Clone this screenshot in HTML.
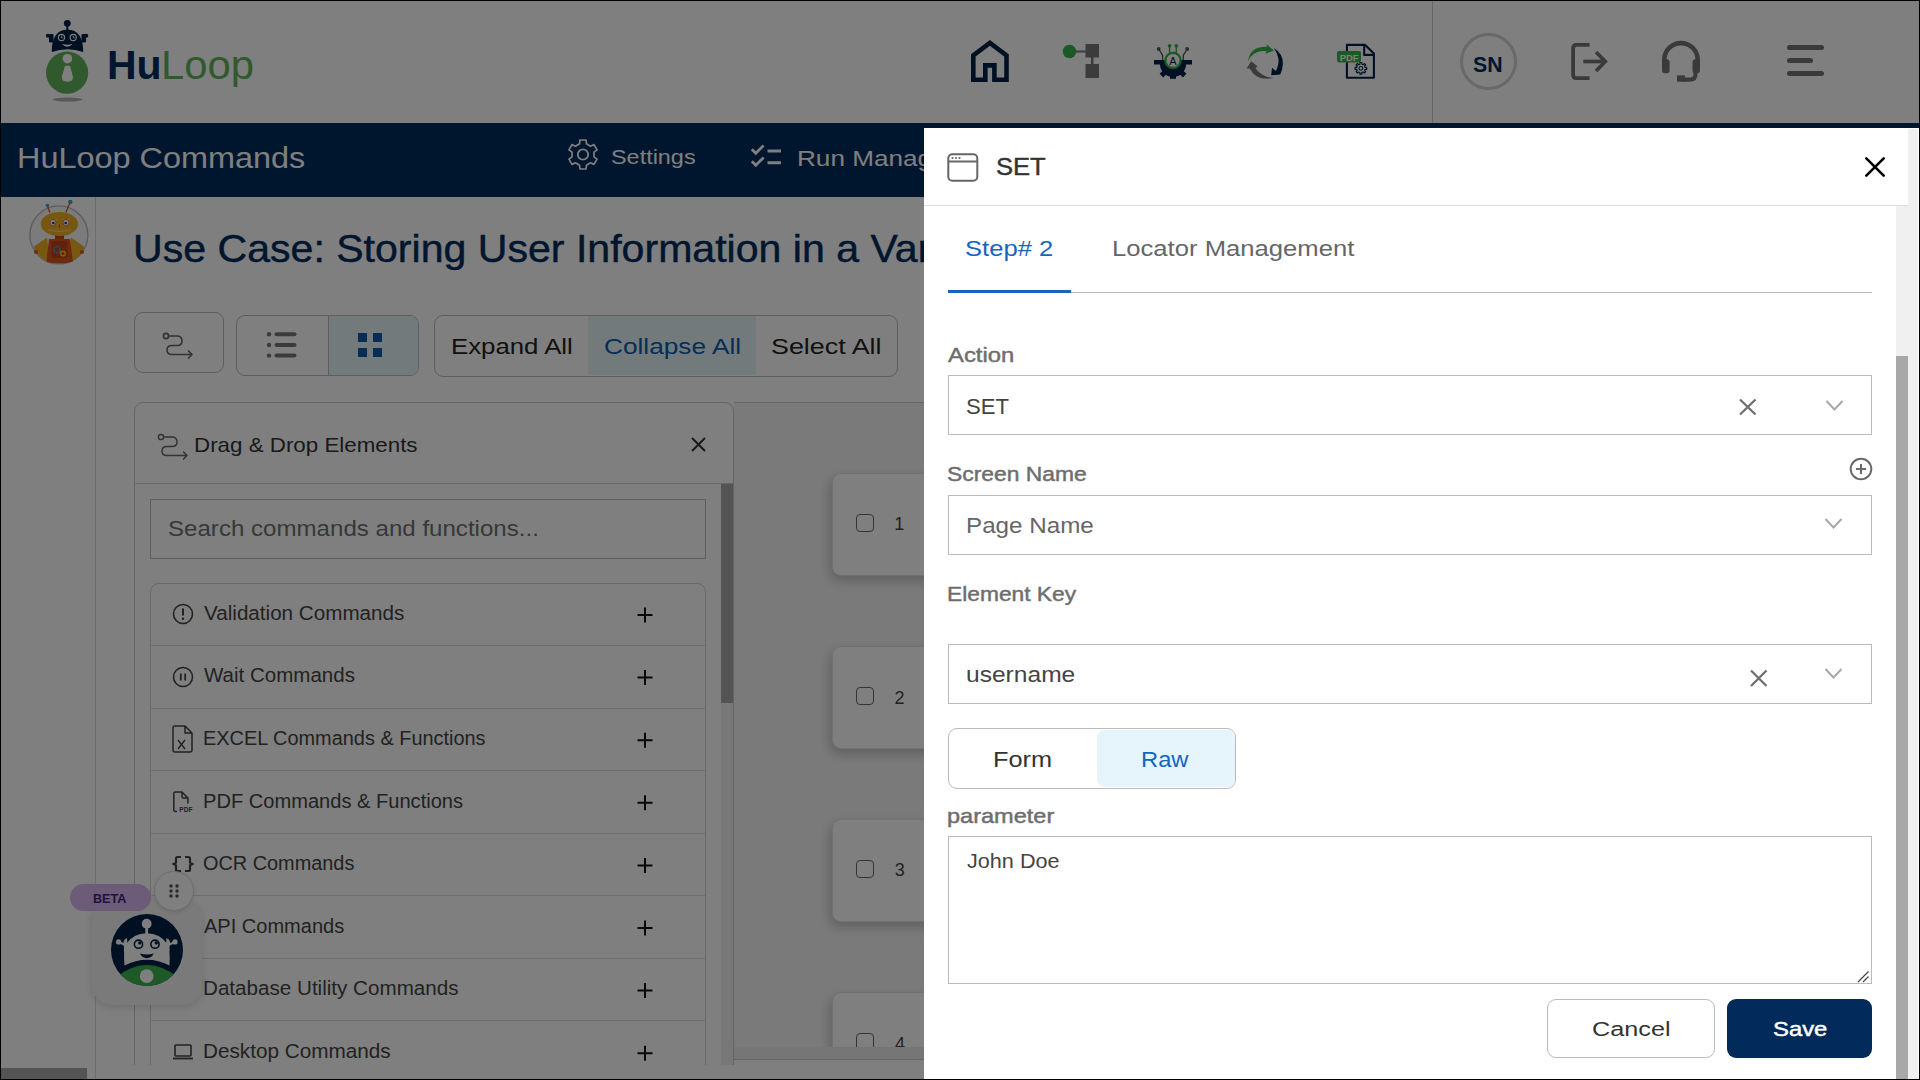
<!DOCTYPE html>
<html><head><meta charset="utf-8">
<style>
*{box-sizing:border-box;margin:0;padding:0}
html,body{width:1920px;height:1080px;overflow:hidden;background:#fff}
body{font-family:"Liberation Sans",sans-serif;position:relative}
.a{position:absolute}
.t{position:absolute;white-space:nowrap;font-family:"Liberation Sans",sans-serif}
svg{position:absolute;overflow:visible}
</style></head><body>
<!-- ============ APP (under overlay) ============ -->
<div class="a" style="left:0;top:0;width:1920px;height:123px;background:#fff"></div>
<!-- logo -->
<svg style="left:0;top:0" width="300" height="123" viewBox="0 0 300 123">
  <circle cx="67.3" cy="23.3" r="3.4" fill="#002147"/>
  <rect x="66.3" y="25" width="2" height="5.5" fill="#002147"/>
  <path d="M51.8 52 C51.5 38 57 29.5 67.5 29.5 C78 29.5 83.5 38 83.2 52 Q67.5 46.5 51.8 52Z" fill="#002147"/>
  <rect x="49" y="34" width="4.5" height="8.5" rx="1.2" fill="#002147"/>
  <rect x="81.5" y="34" width="4.5" height="8.5" rx="1.2" fill="#002147"/>
  <path d="M48 35.8 L51 37.5 M86.2 35.8 L83 37.5" stroke="#002147" stroke-width="1.5"/>
  <circle cx="47.9" cy="35.8" r="2" fill="#002147"/><circle cx="86.25" cy="35.8" r="2" fill="#002147"/>
  <circle cx="61.5" cy="37.5" r="3.1" fill="none" stroke="#fff" stroke-width="1.1"/>
  <circle cx="73.2" cy="37.5" r="3.1" fill="none" stroke="#fff" stroke-width="1.1"/>
  <path d="M61.5 35.5 V37.8 H63.2 M73.2 35.5 V37.8 H74.9" fill="none" stroke="#fff" stroke-width=".8"/>
  <path d="M62 43.8 Q67.3 45.8 72.5 43.8 Q70.5 46.8 67.3 46.8 Q64 46.8 62 43.8Z" fill="#fff"/>
  <circle cx="67.1" cy="72.7" r="21.1" fill="#60b45c"/>
  <circle cx="67.4" cy="58.7" r="4.8" fill="#fff"/>
  <path d="M65 65.8 H70 L72.9 76.5 Q73.5 81.7 67.4 81.7 Q61.3 81.7 61.9 76.5Z" fill="#fff"/>
  <ellipse cx="67.5" cy="99.6" rx="15" ry="2" fill="#b0b0b0"/>
</svg>
<span id="logoHu" class="t" style="left:107.26px;top:43px;font-size:40.33px;line-height:45px;letter-spacing:0.000px;transform:scaleX(1.0163);transform-origin:0 0;color:#002b5c;font-weight:700;">Hu</span><span id="logoLoop" class="t" style="left:160.77px;top:43px;font-size:39.75px;line-height:44px;letter-spacing:0.000px;transform:scaleX(1.0514);transform-origin:0 0;color:#60b45c;font-weight:400;">Loop</span>
<!-- header icons -->
<svg style="left:970px;top:40px" width="40" height="43" viewBox="0 0 40 43">
  <path d="M15.3 39.7 H3.3 V15.3 L19.9 2.9 L36.5 15.3 V39.7 H24.4 V25.4 H15.3 Z" fill="none" stroke="#002147" stroke-width="4.6" stroke-linejoin="miter"/>
</svg>
<svg style="left:1062px;top:43px" width="40" height="37" viewBox="0 0 40 37">
  <circle cx="7.5" cy="8.5" r="6.8" fill="#38b44a"/>
  <rect x="14" y="7.5" width="10" height="2" fill="#787878"/>
  <rect x="23.5" y="1" width="13.5" height="13.5" fill="#787878"/>
  <rect x="29" y="14" width="2.5" height="7" fill="#787878"/>
  <rect x="23.5" y="21" width="13.5" height="14" fill="#787878"/>
</svg>
<svg style="left:1153px;top:43px" width="42" height="38" viewBox="0 0 42 38">
  <defs><clipPath id="gclip"><rect x="0" y="17" width="42" height="21"/></clipPath></defs>
  <g clip-path="url(#gclip)" fill="#002147">
    <rect x="1" y="17" width="38" height="4.5"/>
    <circle cx="20" cy="21" r="13"/>
    <rect x="17" y="30" width="6" height="5.8"/>
    <rect x="-3" y="-2.5" width="6" height="5" transform="translate(29.5 30.5) rotate(45)"/>
    <rect x="-3" y="-2.5" width="6" height="5" transform="translate(10.5 30.5) rotate(-45)"/>
  </g>
  <path d="M5.7 6 L9.6 12.3 V17 M34.2 6 L30.3 12.3 V17" fill="none" stroke="#555" stroke-width="1.3"/>
  <circle cx="5.7" cy="6" r="1.9" fill="#555"/><circle cx="34.2" cy="6" r="1.9" fill="#555"/>
  <path d="M16.6 3 V11 M23.3 3 V11" stroke="#38b44a" stroke-width="1.5"/>
  <circle cx="16.6" cy="2.8" r="1.9" fill="#38b44a"/><circle cx="23.3" cy="2.8" r="1.9" fill="#38b44a"/>
  <circle cx="20" cy="17.4" r="7.6" fill="#fff" stroke="#38b44a" stroke-width="2.4"/>
  <text x="20" y="21.6" font-family="Liberation Sans" font-size="11" text-anchor="middle" fill="#002147">A</text>
</svg>
<svg style="left:1245px;top:43px" width="40" height="38" viewBox="0 0 40 38">
  <path d="M3 18.5 Q5 3 22 3.8 L21.5 1.2 L29 7.6 L20.5 10.8 L21.5 8.2 Q8 6.5 3 18.5 Z" fill="#38b44a"/>
  <path d="M28.9 4.9 Q38.5 11 37.9 21 Q37.5 27 35.2 31.5 L26.2 32.2 L27 24.8 L31 28 Q34 21 33.5 16 Q32 9 28.9 4.9Z" fill="#002147"/>
  <path d="M28.5 35 Q17 34 10.5 25.5 L12.5 23.3 L6.2 18.2 L1.6 25.6 L4.8 25.4 Q11 38.5 28.5 35Z" fill="#777"/>
</svg>
<svg style="left:1335px;top:43px" width="42" height="38" viewBox="0 0 42 38">
  <path d="M11.9 1.9 H30.2 L38.9 10.6 V34.8 H11.9Z" fill="none" stroke="#002147" stroke-width="2.1" stroke-linejoin="round"/>
  <path d="M29.2 1.9 V11.9 H38.9" fill="none" stroke="#002147" stroke-width="2.1" stroke-linejoin="round"/>
  <rect x="2" y="8" width="24" height="11.5" rx="2.2" fill="#38b44a"/>
  <text x="14" y="18.2" font-family="Liberation Sans" font-weight="700" font-size="9.4" text-anchor="middle" fill="#fff">PDF</text>
  <path d="M30.10 24.43 L31.71 24.31 L31.71 26.39 L30.10 26.27 L29.52 27.67 L30.74 28.72 L29.27 30.19 L28.22 28.97 L26.82 29.55 L26.94 31.16 L24.86 31.16 L24.98 29.55 L23.58 28.97 L22.53 30.19 L21.06 28.72 L22.28 27.67 L21.70 26.27 L20.09 26.39 L20.09 24.31 L21.70 24.43 L22.28 23.03 L21.06 21.98 L22.53 20.51 L23.58 21.73 L24.98 21.15 L24.86 19.54 L26.94 19.54 L26.82 21.15 L28.22 21.73 L29.27 20.51 L30.74 21.98 L29.52 23.03Z" fill="none" stroke="#002147" stroke-width="1.1" stroke-linejoin="round"/>
  <circle cx="25.9" cy="25.35" r="1.9" fill="none" stroke="#002147" stroke-width="1.1"/>
</svg>
<div class="a" style="left:1432px;top:0;width:1px;height:123px;background:#ccc"></div>
<div class="a" style="left:1460px;top:33px;width:57px;height:57px;border:3px solid #d2d2d2;border-radius:50%"></div>
<span id="sn" class="t" style="left:1473.39px;top:53px;font-size:21.37px;line-height:24px;letter-spacing:0.000px;transform:scaleX(0.9958);transform-origin:0 0;color:#002b5c;font-weight:700;">SN</span>
<svg style="left:1570px;top:42px" width="40" height="40" viewBox="0 0 40 40">
  <path d="M19.6 2.8 H6.5 Q3.1 2.8 3.1 6.2 V32.7 Q3.1 36.1 6.5 36.1 H19.6" fill="none" stroke="#757575" stroke-width="3.8"/>
  <path d="M13.3 19.5 H34" fill="none" stroke="#757575" stroke-width="3.7"/>
  <path d="M26 10 L35.3 19.5 L26 29" fill="none" stroke="#757575" stroke-width="3.7" stroke-linejoin="miter"/>
</svg>
<svg style="left:1660px;top:40px" width="42" height="43" viewBox="0 0 42 43">
  <path d="M4.3 28 V19.8 A16.7 16.7 0 0 1 37.7 19.8 V28" fill="none" stroke="#757575" stroke-width="4.6"/>
  <rect x="2" y="19.2" width="7.6" height="14.1" rx="3" fill="#757575"/>
  <rect x="32.5" y="19.2" width="7.5" height="14.1" rx="3" fill="#757575"/>
  <path d="M35.5 31 V34 Q35.5 39.6 30 39.6 H22" fill="none" stroke="#757575" stroke-width="4.2"/>
  <rect x="17" y="35.4" width="8" height="6.3" fill="#757575"/>
</svg>
<svg style="left:1786px;top:44px" width="40" height="34" viewBox="0 0 40 34">
  <rect x="1" y="1" width="37" height="5" rx="2.5" fill="#757575"/>
  <rect x="1" y="14" width="26" height="5" rx="2.5" fill="#757575"/>
  <rect x="1" y="27" width="37" height="5" rx="2.5" fill="#757575"/>
</svg>

<!-- nav bar -->
<div class="a" style="left:0;top:123px;width:1920px;height:74px;background:#002b5c"></div>
<span id="navTitle" class="t" style="left:16.84px;top:141px;font-size:29.80px;line-height:33px;letter-spacing:0.000px;transform:scaleX(1.0880);transform-origin:0 0;color:#ffffff;font-weight:400;">HuLoop Commands</span>
<svg style="left:566px;top:138px" width="34" height="34" viewBox="0 0 34 34">
  <path d="M13.54 5.85 L13.92 2.02 L20.08 2.02 L20.46 5.85 L24.49 8.18 L28.00 6.60 L31.08 11.93 L27.96 14.17 L27.96 18.83 L31.08 21.07 L28.00 26.40 L24.49 24.82 L20.46 27.15 L20.08 30.98 L13.92 30.98 L13.54 27.15 L9.51 24.82 L6.00 26.40 L2.92 21.07 L6.04 18.83 L6.04 14.17 L2.92 11.93 L6.00 6.60 L9.51 8.18Z" fill="none" stroke="#fff" stroke-width="1.7" stroke-linejoin="round"/>
  <circle cx="17" cy="16.5" r="5.2" fill="none" stroke="#fff" stroke-width="1.8"/>
</svg>
<span id="navSettings" class="t" style="left:610.94px;top:146px;font-size:19.77px;line-height:22px;letter-spacing:0.000px;transform:scaleX(1.1846);transform-origin:0 0;color:#ffffff;font-weight:400;">Settings</span>
<svg style="left:750px;top:144px" width="34" height="26" viewBox="0 0 34 26">
  <path d="M1.8 5.3 L5.8 9.3 L13.6 1.5 M1.8 17.3 L5.8 21.3 L13.6 13.5" fill="none" stroke="#fff" stroke-width="2.8" stroke-linejoin="miter"/>
  <path d="M17.5 7 H31 M17.5 18.75 H31" stroke="#fff" stroke-width="3"/>
</svg>
<span id="navRun" class="t" style="left:796.75px;top:146px;font-size:22.53px;line-height:25px;letter-spacing:0.000px;transform:scaleX(1.1606);transform-origin:0 0;color:#ffffff;font-weight:400;">Run Management</span>

<!-- sidebar -->
<div class="a" style="left:95px;top:197px;width:1px;height:883px;background:#ddd"></div>
<svg style="left:28px;top:199px" width="64" height="66" viewBox="0 0 64 66">
  <circle cx="30.9" cy="35.9" r="29" fill="#f6f6f6" stroke="#bbb" stroke-width="1.4"/>
  <path d="M21.9 13.4 L19.4 7 M37.8 13.4 L42.3 3" stroke="#d4572a" stroke-width="1.3"/>
  <circle cx="19.4" cy="6.5" r="1.8" fill="#3aa0d8"/><circle cx="42.3" cy="2.9" r="2.2" fill="#3aa0d8"/>
  <path d="M19 38.4 L5.5 48 Q9 56 16 61 L22 62Z M43 38.4 L56.5 48 Q53 56 46 61 L40 62Z" fill="#f0b020"/>
  <rect x="27" y="36" width="9" height="5" fill="#c8461a"/>
  <path d="M21 40 H42 L44.8 62.7 Q31.5 66 18.4 62.7Z" fill="#d9541e"/>
  <rect x="23.5" y="42" width="16" height="17" rx="3" fill="#c2400f"/>
  <circle cx="8" cy="53" r="2" fill="#d9541e"/><circle cx="54" cy="53" r="2" fill="#d9541e"/>
  <ellipse cx="31.4" cy="25" rx="18.6" ry="12" fill="#f0b020"/>
  <rect x="22" y="20" width="7" height="1.5" fill="#fbd58a"/><rect x="35" y="20" width="7" height="1.5" fill="#fbd58a"/>
  <ellipse cx="25" cy="23.6" rx="3" ry="3.3" fill="#fff" stroke="#d4572a" stroke-width=".8"/>
  <ellipse cx="38" cy="23.6" rx="3" ry="3.3" fill="#fff" stroke="#d4572a" stroke-width=".8"/>
  <circle cx="25.3" cy="24" r="1.3" fill="#1f3b63"/><circle cx="37.7" cy="24" r="1.3" fill="#1f3b63"/>
  <rect x="31" y="25.5" width="1" height="3.5" fill="#c8461a"/>
  <path d="M20 31 Q31.5 34 43 31" stroke="#fbd58a" stroke-width="1" fill="none"/>
  <circle cx="29" cy="50.5" r="3.2" fill="none" stroke="#3aa0d8" stroke-width="1.8" stroke-dasharray="1.4 .8"/>
  <circle cx="35" cy="54.5" r="2.3" fill="none" stroke="#f5c518" stroke-width="1.5"/>
</svg>

<!-- title -->
<span id="title" class="t" style="left:132.63px;top:227px;font-size:38.81px;line-height:43px;letter-spacing:0.000px;transform:scaleX(1.0589);transform-origin:0 0;color:#002b5c;font-weight:400;-webkit-text-stroke:0.45px #002b5c">Use Case: Storing User Information in a Variable</span>

<!-- toolbar -->
<div class="a" style="left:134px;top:312px;width:90px;height:61px;border:1px solid #bbb;border-radius:9px"></div>
<svg style="left:162px;top:332px" width="34" height="26" viewBox="0 0 34 26">
  <circle cx="4" cy="4" r="2.6" fill="none" stroke="#666" stroke-width="1.6"/>
  <path d="M6.6 4 H15 Q20 4 20 9 Q20 13.5 15 13.5 H10 Q5 13.5 5 18 Q5 22.5 10 22.5 H30 M26.5 19 L30 22.5 L26.5 26" fill="none" stroke="#666" stroke-width="1.6" stroke-linecap="round" stroke-linejoin="round"/>
</svg>
<div class="a" style="left:236px;top:315px;width:183px;height:61px;border:1px solid #bbb;border-radius:9px;overflow:hidden">
  <div class="a" style="left:91px;top:0;width:92px;height:59px;background:#e6f5f8;border-left:1px solid #bbb"></div>
</div>
<svg style="left:266px;top:331px" width="34" height="30" viewBox="0 0 34 30">
  <circle cx="3" cy="3.3" r="2.2" fill="#777"/><circle cx="3" cy="14" r="2.2" fill="#777"/><circle cx="3" cy="24.6" r="2.2" fill="#777"/>
  <rect x="8.5" y="1.3" width="22" height="4" rx="2" fill="#777"/>
  <rect x="8.5" y="12" width="22" height="4" rx="2" fill="#777"/>
  <rect x="8.5" y="22.6" width="22" height="4" rx="2" fill="#777"/>
</svg>
<svg style="left:358px;top:333px" width="26" height="24" viewBox="0 0 26 24">
  <rect x="0" y="0" width="9" height="9" fill="#0f5aa8"/><rect x="15" y="0" width="9" height="9" fill="#0f5aa8"/>
  <rect x="0" y="15" width="9" height="9" fill="#0f5aa8"/><rect x="15" y="15" width="9" height="9" fill="#0f5aa8"/>
</svg>
<div class="a" style="left:434px;top:315px;width:464px;height:62px;border:1px solid #bbb;border-radius:9px;overflow:hidden">
  <div class="a" style="left:153px;top:0;width:168px;height:59px;background:#e6f5f8"></div>
</div>
<span id="expand" class="t" style="left:450.68px;top:334px;font-size:22.09px;line-height:25px;letter-spacing:0.000px;transform:scaleX(1.1677);transform-origin:0 0;color:#222222;font-weight:400;">Expand All</span><span id="collapse" class="t" style="left:603.67px;top:334px;font-size:22.09px;line-height:25px;letter-spacing:0.000px;transform:scaleX(1.1882);transform-origin:0 0;color:#0b5cad;font-weight:400;">Collapse All</span><span id="select" class="t" style="left:771.28px;top:334px;font-size:22.09px;line-height:25px;letter-spacing:0.000px;transform:scaleX(1.2168);transform-origin:0 0;color:#222222;font-weight:400;">Select All</span>
<!-- drag & drop panel -->
<div class="a" style="left:134px;top:402px;width:600px;height:700px;border:1px solid #c8c8c8;border-radius:9px;background:#fff"></div>
<div class="a" style="left:135px;top:483px;width:598px;height:1px;background:#ccc"></div>
<svg style="left:157px;top:433px" width="34" height="28" viewBox="0 0 34 28">
  <circle cx="4" cy="4" r="2.6" fill="none" stroke="#666" stroke-width="1.5"/>
  <path d="M6.6 4 H15 Q20 4 20 9 Q20 13.5 15 13.5 H10 Q5 13.5 5 18 Q5 22.5 10 22.5 H30 M26.5 19 L30 22.5 L26.5 26" fill="none" stroke="#666" stroke-width="1.5" stroke-linecap="round" stroke-linejoin="round"/>
</svg>
<span id="ddTitle" class="t" style="left:193.97px;top:433px;font-size:20.78px;line-height:23px;letter-spacing:0.000px;transform:scaleX(1.0760);transform-origin:0 0;color:#333333;font-weight:400;">Drag &amp; Drop Elements</span>
<svg style="left:690px;top:436px" width="17" height="17" viewBox="0 0 17 17">
  <path d="M2 2 L15 15 M15 2 L2 15" stroke="#333" stroke-width="2"/>
</svg>
<div class="a" style="left:150px;top:499px;width:556px;height:60px;border:1px solid #bbb"></div>
<span id="search" class="t" style="left:168.11px;top:517px;font-size:21.22px;line-height:23px;letter-spacing:0.000px;transform:scaleX(1.1352);transform-origin:0 0;color:#707070;font-weight:400;">Search commands and functions...</span>
<div class="a" style="left:721px;top:484px;width:12px;height:581px;background:#f1f1f1"></div>
<div class="a" style="left:721px;top:484px;width:12px;height:219px;background:#a8a8a8"></div>
<div class="a" style="left:150px;top:583px;width:556px;height:600px;border:1px solid #d0d0d0;border-radius:9px"></div>
<div class="a" style="left:151px;top:645px;width:554px;height:1px;background:#ddd"></div>
<div class="a" style="left:151px;top:708px;width:554px;height:1px;background:#ddd"></div>
<div class="a" style="left:151px;top:770px;width:554px;height:1px;background:#ddd"></div>
<div class="a" style="left:151px;top:833px;width:554px;height:1px;background:#ddd"></div>
<div class="a" style="left:151px;top:895px;width:554px;height:1px;background:#ddd"></div>
<div class="a" style="left:151px;top:958px;width:554px;height:1px;background:#ddd"></div>
<div class="a" style="left:151px;top:1020px;width:554px;height:1px;background:#ddd"></div>
<span id="row1" class="t" style="left:204.21px;top:602px;font-size:20.35px;line-height:22px;letter-spacing:0.000px;transform:scaleX(1.0143);transform-origin:0 0;color:#444444;font-weight:400;">Validation Commands</span><span id="row2" class="t" style="left:204.21px;top:664px;font-size:20.35px;line-height:22px;letter-spacing:0.000px;transform:scaleX(1.0088);transform-origin:0 0;color:#444444;font-weight:400;">Wait Commands</span><span id="row3" class="t" style="left:202.67px;top:727px;font-size:20.35px;line-height:22px;letter-spacing:0.000px;transform:scaleX(0.9787);transform-origin:0 0;color:#444444;font-weight:400;">EXCEL Commands &amp; Functions</span><span id="row4" class="t" style="left:202.65px;top:790px;font-size:20.35px;line-height:22px;letter-spacing:0.000px;transform:scaleX(0.9872);transform-origin:0 0;color:#444444;font-weight:400;">PDF Commands &amp; Functions</span><span id="row5" class="t" style="left:203.36px;top:852px;font-size:20.35px;line-height:22px;letter-spacing:0.000px;transform:scaleX(0.9773);transform-origin:0 0;color:#444444;font-weight:400;">OCR Commands</span><span id="row6" class="t" style="left:204.26px;top:915px;font-size:20.35px;line-height:22px;letter-spacing:0.000px;transform:scaleX(0.9842);transform-origin:0 0;color:#444444;font-weight:400;">API Commands</span><span id="row7" class="t" style="left:202.61px;top:977px;font-size:20.35px;line-height:22px;letter-spacing:0.000px;transform:scaleX(1.0135);transform-origin:0 0;color:#444444;font-weight:400;">Database Utility Commands</span><span id="row8" class="t" style="left:202.60px;top:1040px;font-size:20.35px;line-height:22px;letter-spacing:0.000px;transform:scaleX(1.0182);transform-origin:0 0;color:#444444;font-weight:400;">Desktop Commands</span>
<!-- row icons -->
<svg style="left:172px;top:603px" width="22" height="22" viewBox="0 0 22 22">
  <circle cx="11" cy="11" r="9.5" fill="none" stroke="#444" stroke-width="1.6"/>
  <path d="M11 5.5 V12.5" stroke="#444" stroke-width="2"/><circle cx="11" cy="15.8" r="1.2" fill="#444"/>
</svg>
<svg style="left:172px;top:666px" width="22" height="22" viewBox="0 0 22 22">
  <circle cx="11" cy="11" r="9.5" fill="none" stroke="#444" stroke-width="1.6"/>
  <path d="M8.8 7.5 V14.5 M13.2 7.5 V14.5" stroke="#444" stroke-width="1.8"/>
</svg>
<svg style="left:172px;top:725px" width="22" height="28" viewBox="0 0 22 28">
  <path d="M3 1 H13 L20 8 V25 Q20 27 18 27 H3 Q1 27 1 25 V3 Q1 1 3 1Z M13 1 V8 H20" fill="none" stroke="#444" stroke-width="1.5" stroke-linejoin="round"/>
  <path d="M6 15 L13 24 M13 15 L6 24" stroke="#444" stroke-width="1.4"/>
</svg>
<svg style="left:172px;top:791px" width="22" height="24" viewBox="0 0 22 24">
  <path d="M5 20.4 H3.5 Q1.8 20.4 1.8 18.7 V2.7 Q1.8 1 3.5 1 H10 L15.9 7 V12.5 M10 1 V5.8 Q10 7 11.2 7 H15.9" fill="none" stroke="#444" stroke-width="1.5" stroke-linejoin="round"/>
  <text x="7.3" y="20.5" font-family="Liberation Sans" font-weight="700" font-size="7.6" textLength="13.2" lengthAdjust="spacingAndGlyphs" fill="#444">PDF</text>
</svg>
<svg style="left:172px;top:853px" width="22" height="22" viewBox="0 0 22 22">
  <path d="M9 4 H5.6 Q4 4 4 5.6 V9.6 L1.6 11 L4 12.4 V16.4 Q4 18 5.6 18 H9 M13 4 H16.4 Q18 4 18 5.6 V9.6 L20.4 11 L18 12.4 V16.4 Q18 18 16.4 18 H13" fill="none" stroke="#444" stroke-width="2.2" stroke-linejoin="miter"/>
</svg>
<svg style="left:172px;top:1043px" width="22" height="18" viewBox="0 0 22 18">
  <rect x="3" y="2" width="16" height="11" rx="1" fill="none" stroke="#444" stroke-width="1.6"/>
  <path d="M1 15.5 H21" stroke="#444" stroke-width="1.8"/>
</svg>
<!-- plus signs -->
<svg style="left:636px;top:604px" width="18" height="450" viewBox="0 0 18 450">
  <g stroke="#111" stroke-width="2">
  <path d="M1.5 11 H16.5 M9 3.5 V18.5"/>
  <path d="M1.5 73.6 H16.5 M9 66.1 V81.1"/>
  <path d="M1.5 136.2 H16.5 M9 128.7 V143.7"/>
  <path d="M1.5 198.8 H16.5 M9 191.3 V206.3"/>
  <path d="M1.5 261.4 H16.5 M9 253.9 V268.9"/>
  <path d="M1.5 324 H16.5 M9 316.5 V331.5"/>
  <path d="M1.5 386.6 H16.5 M9 379.1 V394.1"/>
  <path d="M1.5 449.2 H16.5 M9 441.7 V456.7"/>
  </g>
</svg>
<!-- bottom of main area -->
<div class="a" style="left:96px;top:1065px;width:828px;height:15px;background:#fff"></div>
<div class="a" style="left:1px;top:1068px;width:86px;height:11px;background:#a8a8a8"></div>

<!-- canvas -->
<div class="a" style="left:734px;top:402px;width:1200px;height:645px;background:#f5f5f5;border-top:1px solid #ccc"></div>
<div class="a" style="left:734px;top:1047px;width:1200px;height:13px;background:#ececec;border-bottom:1px solid #ccc"></div>
<div class="a" style="left:832px;top:473px;width:300px;height:103px;background:#fff;border:1px solid #e4e4e4;border-radius:9px;box-shadow:-2px 5px 12px rgba(0,0,0,.22)"></div>
<div class="a" style="left:832px;top:646px;width:300px;height:103px;background:#fff;border:1px solid #e4e4e4;border-radius:9px;box-shadow:-2px 5px 12px rgba(0,0,0,.22)"></div>
<div class="a" style="left:832px;top:819px;width:300px;height:103px;background:#fff;border:1px solid #e4e4e4;border-radius:9px;box-shadow:-2px 5px 12px rgba(0,0,0,.22)"></div>
<div class="a" style="left:734px;top:900px;width:400px;height:147px;overflow:hidden">
  <div class="a" style="left:98px;top:92px;width:300px;height:103px;background:#fff;border:1px solid #e4e4e4;border-radius:9px;box-shadow:-2px 5px 12px rgba(0,0,0,.22)"></div>
  <div class="a" style="left:122px;top:133px;width:18px;height:18px;border:1.6px solid #6a6a6a;border-radius:4px"></div>
</div>
<div class="a" style="left:856px;top:514px;width:18px;height:18px;border:1.6px solid #6a6a6a;border-radius:4px"></div>
<div class="a" style="left:856px;top:687px;width:18px;height:18px;border:1.6px solid #6a6a6a;border-radius:4px"></div>
<div class="a" style="left:856px;top:860px;width:18px;height:18px;border:1.6px solid #6a6a6a;border-radius:4px"></div>
<span id="c1" class="t" style="left:894.13px;top:514px;font-size:18.00px;line-height:20px;letter-spacing:0.000px;transform:scaleX(1.0000);transform-origin:0 0;color:#444444;font-weight:400;">1</span><span id="c2" class="t" style="left:894.59px;top:688px;font-size:18.00px;line-height:20px;letter-spacing:0.000px;transform:scaleX(1.0000);transform-origin:0 0;color:#444444;font-weight:400;">2</span><span id="c3" class="t" style="left:894.81px;top:860px;font-size:18.00px;line-height:20px;letter-spacing:0.000px;transform:scaleX(1.0000);transform-origin:0 0;color:#444444;font-weight:400;">3</span>
<div class="a" style="left:0;top:0;width:1920px;height:1047px;overflow:hidden"><span id="c4" class="t" style="left:895.09px;top:1034px;font-size:18.00px;line-height:20px;letter-spacing:0.000px;transform:scaleX(1.0000);transform-origin:0 0;color:#444444;font-weight:400;">4</span></div>

<!-- chat widget -->
<div class="a" style="left:92px;top:899px;width:110px;height:106px;background:#f4f4f4;border-radius:20px;box-shadow:0 2px 8px rgba(0,0,0,.15)"></div>
<svg style="left:111px;top:914px" width="72" height="72" viewBox="0 0 72 72">
  <defs><clipPath id="cc"><circle cx="36" cy="36" r="36"/></clipPath></defs>
  <circle cx="36" cy="36" r="36" fill="#002147"/>
  <g clip-path="url(#cc)">
  <path d="M0 80 L4 64 Q36 38 68 64 L72 80Z" fill="#3cb450"/>
  <circle cx="35.7" cy="62.1" r="6.9" fill="#fff"/>
  </g>
  <circle cx="35.7" cy="9.7" r="4.9" fill="#fff"/><rect x="34.3" y="13" width="2.8" height="7" fill="#fff"/>
  <path d="M13.5 51.5 Q12 36 15 30 Q22 19.5 35.7 19.2 Q49.5 19.5 56.5 30 Q59.5 36 58.5 51.5 Q36 40 13.5 51.5Z" fill="#fff"/>
  <path d="M16 24 Q11 26 13 32 Q12 40 17 40Z M55.5 24 Q60.5 26 58.5 32 Q59.5 40 54.5 40Z" fill="#fff"/>
  <circle cx="7.6" cy="27.9" r="2.6" fill="#fff"/><circle cx="64" cy="27.9" r="2.6" fill="#fff"/>
  <path d="M8 28 L14 31 M63.6 28 L57.5 31" stroke="#fff" stroke-width="2.2"/>
  <circle cx="27.5" cy="30.2" r="4.1" fill="none" stroke="#002147" stroke-width="1.6"/>
  <circle cx="44" cy="30.2" r="4.1" fill="none" stroke="#002147" stroke-width="1.6"/>
  <circle cx="28.8" cy="28.9" r="1.7" fill="#002147"/><circle cx="45.3" cy="28.9" r="1.7" fill="#002147"/>
  <path d="M29 39.6 Q35.9 41.4 42.8 39.6 Q40.5 44.2 35.9 44.2 Q31.3 44.2 29 39.6Z" fill="#002147"/>
</svg>
<div class="a" style="left:70px;top:884px;width:81px;height:27px;background:#d9b8f0;border-radius:14px"></div>
<span id="beta" class="t" style="left:92.91px;top:891px;font-size:13.23px;line-height:15px;letter-spacing:0.000px;transform:scaleX(0.9547);transform-origin:0 0;color:#4a1f80;font-weight:700;">BETA</span>
<div class="a" style="left:154px;top:871px;width:40px;height:40px;background:#fff;border:1px solid #ddd;border-radius:50%;box-shadow:0 1px 4px rgba(0,0,0,.12)"></div>
<svg style="left:168px;top:883px" width="12" height="16" viewBox="0 0 12 16">
  <g fill="#555"><circle cx="3" cy="3" r="1.7"/><circle cx="9" cy="3" r="1.7"/><circle cx="3" cy="8" r="1.7"/><circle cx="9" cy="8" r="1.7"/><circle cx="3" cy="13" r="1.7"/><circle cx="9" cy="13" r="1.7"/></g>
</svg>

<!-- ============ OVERLAY ============ -->
<div class="a" style="left:0;top:0;width:1920px;height:1080px;background:rgba(0,0,0,.5)"></div>
<!-- ============ RIGHT PANEL ============ -->
<div class="a" style="left:924px;top:128px;width:996px;height:952px;background:#fff"></div>
<div class="a" style="left:1908px;top:129px;width:10px;height:950px;background:#f0f0f0"></div>
<div class="a" style="left:924px;top:205px;width:984px;height:1px;background:#ddd"></div>
<div class="a" style="left:1896px;top:206px;width:12px;height:873px;background:#f0f0f0"></div>
<div class="a" style="left:1896px;top:356px;width:12px;height:723px;background:#a8a8a8"></div>
<svg style="left:947px;top:153px" width="32" height="29" viewBox="0 0 32 29">
  <rect x="1.3" y="1.3" width="29" height="26.4" rx="4" fill="none" stroke="#666" stroke-width="2"/>
  <path d="M1.3 8.5 H30.3" stroke="#666" stroke-width="2"/>
  <circle cx="5.5" cy="5" r="1.1" fill="#666"/><circle cx="9" cy="5" r="1.1" fill="#666"/><circle cx="12.5" cy="5" r="1.1" fill="#666"/>
</svg>
<span id="pTitle" class="t" style="left:995.84px;top:153px;font-size:24.71px;line-height:27px;letter-spacing:0.000px;transform:scaleX(1.0354);transform-origin:0 0;color:#333333;font-weight:400;-webkit-text-stroke:0.45px #333333">SET</span>
<svg style="left:1864px;top:156px" width="22" height="22" viewBox="0 0 22 22">
  <path d="M2.3 2.3 L19.7 19.7 M19.7 2.3 L2.3 19.7" stroke="#000" stroke-width="2.6" stroke-linecap="round"/>
</svg>
<span id="tab1" class="t" style="left:964.84px;top:237px;font-size:21.51px;line-height:24px;letter-spacing:0.000px;transform:scaleX(1.1906);transform-origin:0 0;color:#1565c0;font-weight:400;">Step# 2</span><span id="tab2" class="t" style="left:1111.90px;top:237px;font-size:21.51px;line-height:24px;letter-spacing:0.000px;transform:scaleX(1.1925);transform-origin:0 0;color:#666666;font-weight:400;">Locator Management</span>
<div class="a" style="left:948px;top:292px;width:924px;height:1px;background:#bbb"></div>
<div class="a" style="left:948px;top:290px;width:123px;height:3px;background:#1565c0"></div>

<span id="lblAction" class="t" style="left:947.75px;top:343px;font-size:20.49px;line-height:23px;letter-spacing:0.000px;transform:scaleX(1.1626);transform-origin:0 0;color:#6e6e6e;font-weight:400;-webkit-text-stroke:0.45px #6e6e6e">Action</span>
<div class="a" style="left:948px;top:375px;width:924px;height:60px;border:1px solid #bbb"></div>
<span id="valAction" class="t" style="left:966.19px;top:394px;font-size:21.87px;line-height:25px;letter-spacing:0.000px;transform:scaleX(1.0129);transform-origin:0 0;color:#444444;font-weight:400;">SET</span>
<svg style="left:1738px;top:398px" width="20" height="18" viewBox="0 0 20 18">
  <path d="M2 1.5 L17.5 16.5 M17.5 1.5 L2 16.5" stroke="#707070" stroke-width="2.3"/>
</svg>
<svg style="left:1824px;top:399px" width="21" height="14" viewBox="0 0 21 14">
  <path d="M2.5 2 L10.5 10.5 L18.5 2" fill="none" stroke="#a8a8a8" stroke-width="2"/>
</svg>

<span id="lblScreen" class="t" style="left:947.06px;top:463px;font-size:19.77px;line-height:22px;letter-spacing:0.000px;transform:scaleX(1.1556);transform-origin:0 0;color:#6e6e6e;font-weight:400;-webkit-text-stroke:0.45px #6e6e6e">Screen Name</span>
<svg style="left:1849px;top:457px" width="24" height="24" viewBox="0 0 24 24">
  <circle cx="12" cy="12" r="10.3" fill="none" stroke="#6a6a6a" stroke-width="2"/>
  <path d="M12 7 V17 M7 12 H17" stroke="#6a6a6a" stroke-width="2"/>
</svg>
<div class="a" style="left:948px;top:495px;width:924px;height:60px;border:1px solid #bbb"></div>
<span id="valScreen" class="t" style="left:966.31px;top:513px;font-size:21.87px;line-height:25px;letter-spacing:0.000px;transform:scaleX(1.1068);transform-origin:0 0;color:#666666;font-weight:400;">Page Name</span>
<svg style="left:1823px;top:517px" width="21" height="14" viewBox="0 0 21 14">
  <path d="M2.5 2 L10.5 10.5 L18.5 2" fill="none" stroke="#a8a8a8" stroke-width="2"/>
</svg>

<span id="lblElem" class="t" style="left:947.23px;top:582px;font-size:20.49px;line-height:23px;letter-spacing:0.000px;transform:scaleX(1.1117);transform-origin:0 0;color:#6e6e6e;font-weight:400;-webkit-text-stroke:0.45px #6e6e6e">Element Key</span>
<div class="a" style="left:948px;top:644px;width:924px;height:60px;border:1px solid #bbb"></div>
<span id="valElem" class="t" style="left:966.20px;top:662px;font-size:21.80px;line-height:25px;letter-spacing:0.000px;transform:scaleX(1.1274);transform-origin:0 0;color:#444444;font-weight:400;">username</span>
<svg style="left:1749px;top:669px" width="20" height="19" viewBox="0 0 20 19">
  <path d="M2 1.5 L17.5 17 M17.5 1.5 L2 17" stroke="#707070" stroke-width="2.3"/>
</svg>
<svg style="left:1823px;top:667px" width="21" height="14" viewBox="0 0 21 14">
  <path d="M2.5 2 L10.5 10.5 L18.5 2" fill="none" stroke="#a8a8a8" stroke-width="2"/>
</svg>

<div class="a" style="left:948px;top:728px;width:288px;height:61px;border:1px solid #bbb;border-radius:9px;overflow:hidden">
  <div class="a" style="left:148px;top:1px;width:138px;height:57px;background:#e6f4fc;border-radius:8px 0 0 8px"></div>
</div>
<span id="form" class="t" style="left:993.32px;top:747px;font-size:21.66px;line-height:25px;letter-spacing:0.000px;transform:scaleX(1.1685);transform-origin:0 0;color:#333333;font-weight:400;">Form</span><span id="raw" class="t" style="left:1140.75px;top:747px;font-size:21.66px;line-height:25px;letter-spacing:0.000px;transform:scaleX(1.0960);transform-origin:0 0;color:#1565c0;font-weight:400;">Raw</span>

<span id="lblParam" class="t" style="left:947.38px;top:805px;font-size:20.20px;line-height:22px;letter-spacing:0.000px;transform:scaleX(1.1662);transform-origin:0 0;color:#6e6e6e;font-weight:400;-webkit-text-stroke:0.45px #6e6e6e">parameter</span>
<div class="a" style="left:948px;top:836px;width:924px;height:148px;border:1px solid #bbb"></div>
<span id="valParam" class="t" style="left:966.66px;top:850px;font-size:20.35px;line-height:22px;letter-spacing:0.000px;transform:scaleX(1.0632);transform-origin:0 0;color:#444444;font-weight:400;">John Doe</span>
<svg style="left:1856px;top:970px" width="14" height="13" viewBox="0 0 14 13">
  <path d="M2 12 L12.5 1.5 M7 12 L12.5 6.5" stroke="#444" stroke-width="1.2"/>
</svg>

<div class="a" style="left:1547px;top:999px;width:168px;height:59px;border:1px solid #bbb;border-radius:9px;background:#fff"></div>
<span id="cancel" class="t" style="left:1592.32px;top:1017px;font-size:21.08px;line-height:23px;letter-spacing:0.000px;transform:scaleX(1.1973);transform-origin:0 0;color:#333333;font-weight:400;">Cancel</span>
<div class="a" style="left:1727px;top:999px;width:145px;height:59px;border-radius:9px;background:#022b5b"></div>
<span id="save" class="t" style="left:1772.67px;top:1017px;font-size:21.08px;line-height:23px;letter-spacing:0.000px;transform:scaleX(1.1321);transform-origin:0 0;color:#ffffff;font-weight:400;-webkit-text-stroke:0.45px #ffffff">Save</span>

<!-- frame -->
<div class="a" style="left:0;top:0;width:1920px;height:1080px;border:1px solid #000"></div>
</body></html>
